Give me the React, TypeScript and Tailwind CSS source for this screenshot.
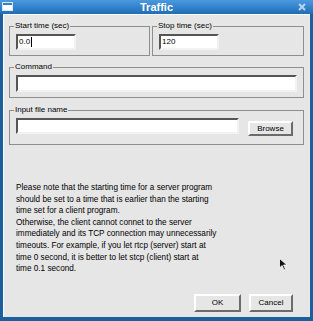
import React from 'react';

const font = { fontFamily: '"Liberation Sans", Arial, sans-serif' };

const GroupBox: React.FC<{ label: string; className?: string; children: React.ReactNode }> = ({ label, className, children }) => (
  <fieldset className={`border border-[#8e8e8e] px-[6px] pb-[5px] pt-[1px] ${className ?? ''}`}>
    <legend className="ml-[-2px] px-[1px] text-[8px] leading-[10px] text-black">{label}</legend>
    {children}
  </fieldset>
);

const Field: React.FC<{ value?: string; className?: string; caret?: boolean }> = ({ value, className, caret }) => (
  <div
    className={`flex h-[16px] items-center border-2 border-t-[#555] border-l-[#555] border-b-[#f2f2f2] border-r-[#f2f2f2] bg-white pl-[1px] text-[8px] text-black ${className ?? ''}`}
  >
    {value}
    {caret && <span className="ml-[1px] h-[10px] w-px bg-black" />}
  </div>
);

const Button: React.FC<{ label: string; className?: string }> = ({ label, className }) => (
  <button
    className={`flex items-center justify-center border-2 border-t-white border-l-white border-b-[#6b6b6b] border-r-[#6b6b6b] bg-[#e6e6e6] text-[8px] text-black ${className ?? ''}`}
  >
    {label}
  </button>
);

export default function App() {
  return (
    <div className="flex h-[321px] w-[313px] flex-col bg-[#1c5f9d]" style={font}>
      {/* Title bar */}
      <div className="relative flex h-[14px] items-center justify-center bg-gradient-to-b from-[#4a9ae0] to-[#1f6db5]">
        <div className="absolute left-[2px] top-[2px] h-[9px] w-[11px] border border-[#d8e6f4] bg-white">
          <div className="h-[2px] bg-[#3b7fc4]" />
        </div>
        <span className="text-[11px] font-bold leading-none text-white">Traffic</span>
        <div className="absolute right-[6px] top-[2px] flex h-[10px] w-[10px] items-center justify-center">
          <svg width="8" height="8" viewBox="0 0 8 8">
            <path d="M1 1L7 7M7 1L1 7" stroke="#b9d4ee" strokeWidth="2" />
          </svg>
        </div>
      </div>

      {/* Body */}
      <div className="relative mx-[3px] mb-[4px] flex flex-1 flex-col border-t border-l border-white bg-[#e6e6e6] pl-[5px] pr-[6px] pt-[6px]">
        <div className="flex gap-[2px]">
          <GroupBox label="Start time (sec)" className="w-[141px]">
            <Field value="0.0" caret className="mt-[2px] w-[60px]" />
          </GroupBox>
          <GroupBox label="Stop time (sec)" className="flex-1">
            <Field value="120" className="mt-[2px] w-[60px]" />
          </GroupBox>
        </div>

        <GroupBox label="Command" className="mt-[6px]">
          <Field className="mt-[2px] h-[17px]" />
        </GroupBox>

        <GroupBox label="Input file name" className="mt-[7px] pb-[8px]">
          <div className="mt-[2px] flex items-start gap-[9px]">
            <Field className="h-[16px] w-[223px]" />
            <Button label="Browse" className="mt-[3px] h-[15px] w-[45px]" />
          </div>
        </GroupBox>

        <p className="mt-[37px] pl-[7px] text-[8.2px] leading-[11.6px] text-black">
          Please note that the starting time for a server program
          <br />
          should be set to a time that is earlier than the starting
          <br />
          time set for a client program.
          <br />
          Otherwise, the client cannot connet to the server
          <br />
          immediately and its TCP connection may unnecessarily
          <br />
          timeouts. For example, if you let rtcp (server) start at
          <br />
          time 0 second, it is better to let stcp (client) start at
          <br />
          time 0.1 second.
        </p>

        <div className="mt-auto mb-[5px] flex justify-end gap-[8px] pr-[11px]">
          <Button label="OK" className="h-[18px] w-[47px]" />
          <Button label="Cancel" className="h-[18px] w-[44px]" />
        </div>

        {/* mouse pointer */}
        <svg className="absolute left-[275px] top-[243px]" width="9" height="13" viewBox="0 0 9 13">
          <path d="M0.5 0.5L0.5 10L3 7.5L5 12L6.5 11.3L4.6 7L8 7Z" fill="#111" stroke="#fff" strokeWidth="0.8" />
        </svg>
      </div>
    </div>
  );
}
